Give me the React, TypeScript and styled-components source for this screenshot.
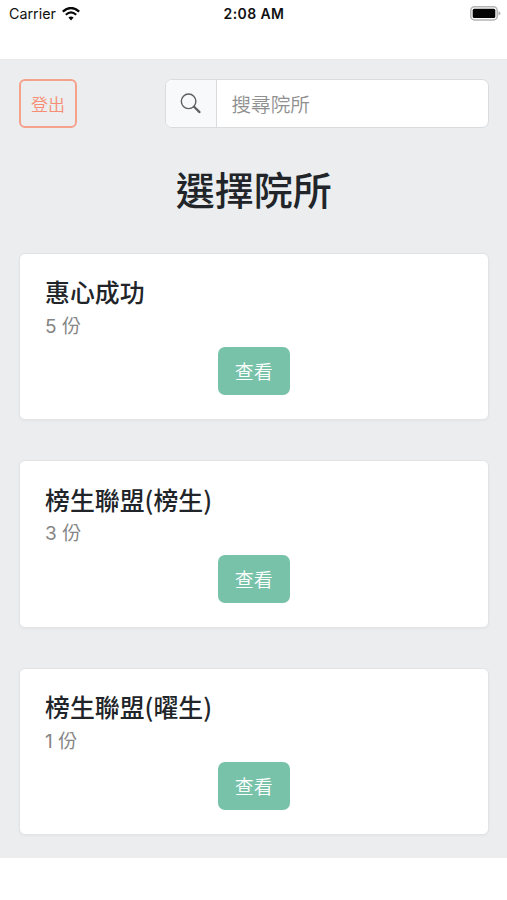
import React from "react";
import styled, { createGlobalStyle } from "styled-components";

const GlobalStyle = createGlobalStyle`
  * { box-sizing: border-box; }
  body {
    margin: 0;
    background: #fff;
    font-family: Inter, "Noto Sans CJK TC", sans-serif;
    color: #212529;
  }
  h1, h2, p { margin: 0; }
`;

const Screen = styled.div`
  width: 507px;
  height: 900px;
  overflow: hidden;
  background: #fff;
`;

const StatusBar = styled.header`
  display: grid;
  grid-template-columns: 1fr auto 1fr;
  align-items: center;
  height: 59px;
  padding: 0 6px 32px 9px;
  color: #111;
  font-size: 14px;
  line-height: 27px;
`;

const Carrier = styled.div`
  display: flex;
  align-items: center;
  gap: 6px;
  font-size: 14.3px;
`;

const Clock = styled.div`
  margin-right: 2px;
  font-size: 14px;
  font-weight: 600;
  letter-spacing: 0.4px;
`;

const BatterySlot = styled.div`
  display: flex;
  justify-content: flex-end;
`;

const Content = styled.main`
  height: 799px;
  padding: 20px 18.5px 0 19px;
  background: #ebedef;
  border-top: 1px solid #e8eaea;
`;

const Toolbar = styled.div`
  display: flex;
  justify-content: space-between;
  height: 48px;
  margin-top: -1px;
`;

const LogoutButton = styled.button`
  width: 58px;
  height: 49px;
  padding: 0;
  border: 2px solid #f5a18c;
  border-radius: 6px;
  background: transparent;
  color: #f78e73;
  font: 350 17px/42px "Noto Sans CJK TC", sans-serif;
`;

const SearchGroup = styled.div`
  display: flex;
  width: 324px;
  height: 49px;
  overflow: hidden;
  border: 1px solid #d9dcdf;
  border-radius: 7px;
  background: #fff;
`;

const SearchAddon = styled.div`
  display: flex;
  align-items: center;
  justify-content: center;
  width: 51px;
  border-right: 1px solid #d9dcdf;
  background: #f8f9fb;
`;

const SearchInput = styled.input`
  flex: 1;
  min-width: 0;
  padding: 0 15px 1px;
  border: 0;
  outline: 0;
  background: transparent;
  font: 350 19.6px "Noto Sans CJK TC", sans-serif;
  &::placeholder { color: #909090; opacity: 1; }
`;

const Title = styled.h1`
  margin-top: 37px;
  font: 500 39px/48px "Noto Sans CJK TC", sans-serif;
  text-align: center;
`;

const ClinicList = styled.div`
  display: flex;
  flex-direction: column;
  gap: 40px;
  margin-top: 40.7px;
`;

const ClinicCard = styled.section`
  display: flex;
  flex-direction: column;
  height: 167.6px;
  padding: 22.5px 25px;
  border: 1px solid #e1e4e5;
  border-radius: 6px;
  background: #fff;
  box-shadow: 0 1px 3px rgba(0, 0, 0, 0.04);
`;

const ClinicName = styled.h2`
  font: 500 24.9px/30px "Noto Sans CJK TC", sans-serif;
`;

const Count = styled.p`
  margin-top: 7.5px;
  color: #858585;
  font-size: 19px;
  line-height: 26px;
  word-spacing: 0.2px;
`;

const ViewButton = styled.button`
  align-self: center;
  width: 72px;
  height: 48px;
  margin-top: 7.5px;
  padding: 0;
  border: 0;
  border-radius: 7px;
  background: #79c2aa;
  color: #fff;
  font: 350 19px/46px "Noto Sans CJK TC", sans-serif;
`;

const WifiIcon = () => (
  <svg width="18" height="14" viewBox="0 0 18 14" fill="none" stroke="#080808">
    <path d="M.8 4.7Q9-2.7 17.2 4.7" strokeWidth="2.3" />
    <path d="M3.8 7.7Q9 3.1 14.2 7.7" strokeWidth="2.1" />
    <path d="M6.4 10.6Q9 8.3 11.6 10.6L9 13.4Z" fill="#080808" stroke="none" />
  </svg>
);

const BatteryIcon = () => (
  <svg width="31" height="15" viewBox="0 0 31 15">
    <rect x=".8" y=".8" width="26.4" height="13.1" rx="3.7" fill="#fff" stroke="#b4b4b4" strokeWidth="1.5" />
    <rect x="2.7" y="2.7" width="22.6" height="9.3" rx="1.5" fill="#050505" />
    <path d="M28.5 5.2Q32.3 7.4 28.5 9.6Z" fill="#aaa" />
  </svg>
);

const SearchIcon = () => (
  <svg width="21" height="21" viewBox="0 0 21 21" fill="none" stroke="#5c5e62" strokeLinecap="round">
    <circle cx="8.6" cy="8.3" r="7.3" strokeWidth="1.4" />
    <path d="M14.1 13.8L19.5 19.1" strokeWidth="2.2" />
  </svg>
);

const clinics = [
  { name: "惠心成功", count: 5 },
  { name: "榜生聯盟(榜生)", count: 3 },
  { name: "榜生聯盟(曜生)", count: 1 },
];

export default function App() {
  return (
    <Screen>
      <GlobalStyle />
      <StatusBar>
        <Carrier>Carrier<WifiIcon /></Carrier>
        <Clock>2:08 AM</Clock>
        <BatterySlot><BatteryIcon /></BatterySlot>
      </StatusBar>
      <Content>
        <Toolbar>
          <LogoutButton>登出</LogoutButton>
          <SearchGroup>
            <SearchAddon><SearchIcon /></SearchAddon>
            <SearchInput placeholder="搜尋院所" aria-label="搜尋院所" />
          </SearchGroup>
        </Toolbar>
        <Title>選擇院所</Title>
        <ClinicList>
          {clinics.map((clinic) => (
            <ClinicCard key={clinic.name}>
              <ClinicName>{clinic.name}</ClinicName>
              <Count>{clinic.count} 份</Count>
              <ViewButton>查看</ViewButton>
            </ClinicCard>
          ))}
        </ClinicList>
      </Content>
    </Screen>
  );
}
